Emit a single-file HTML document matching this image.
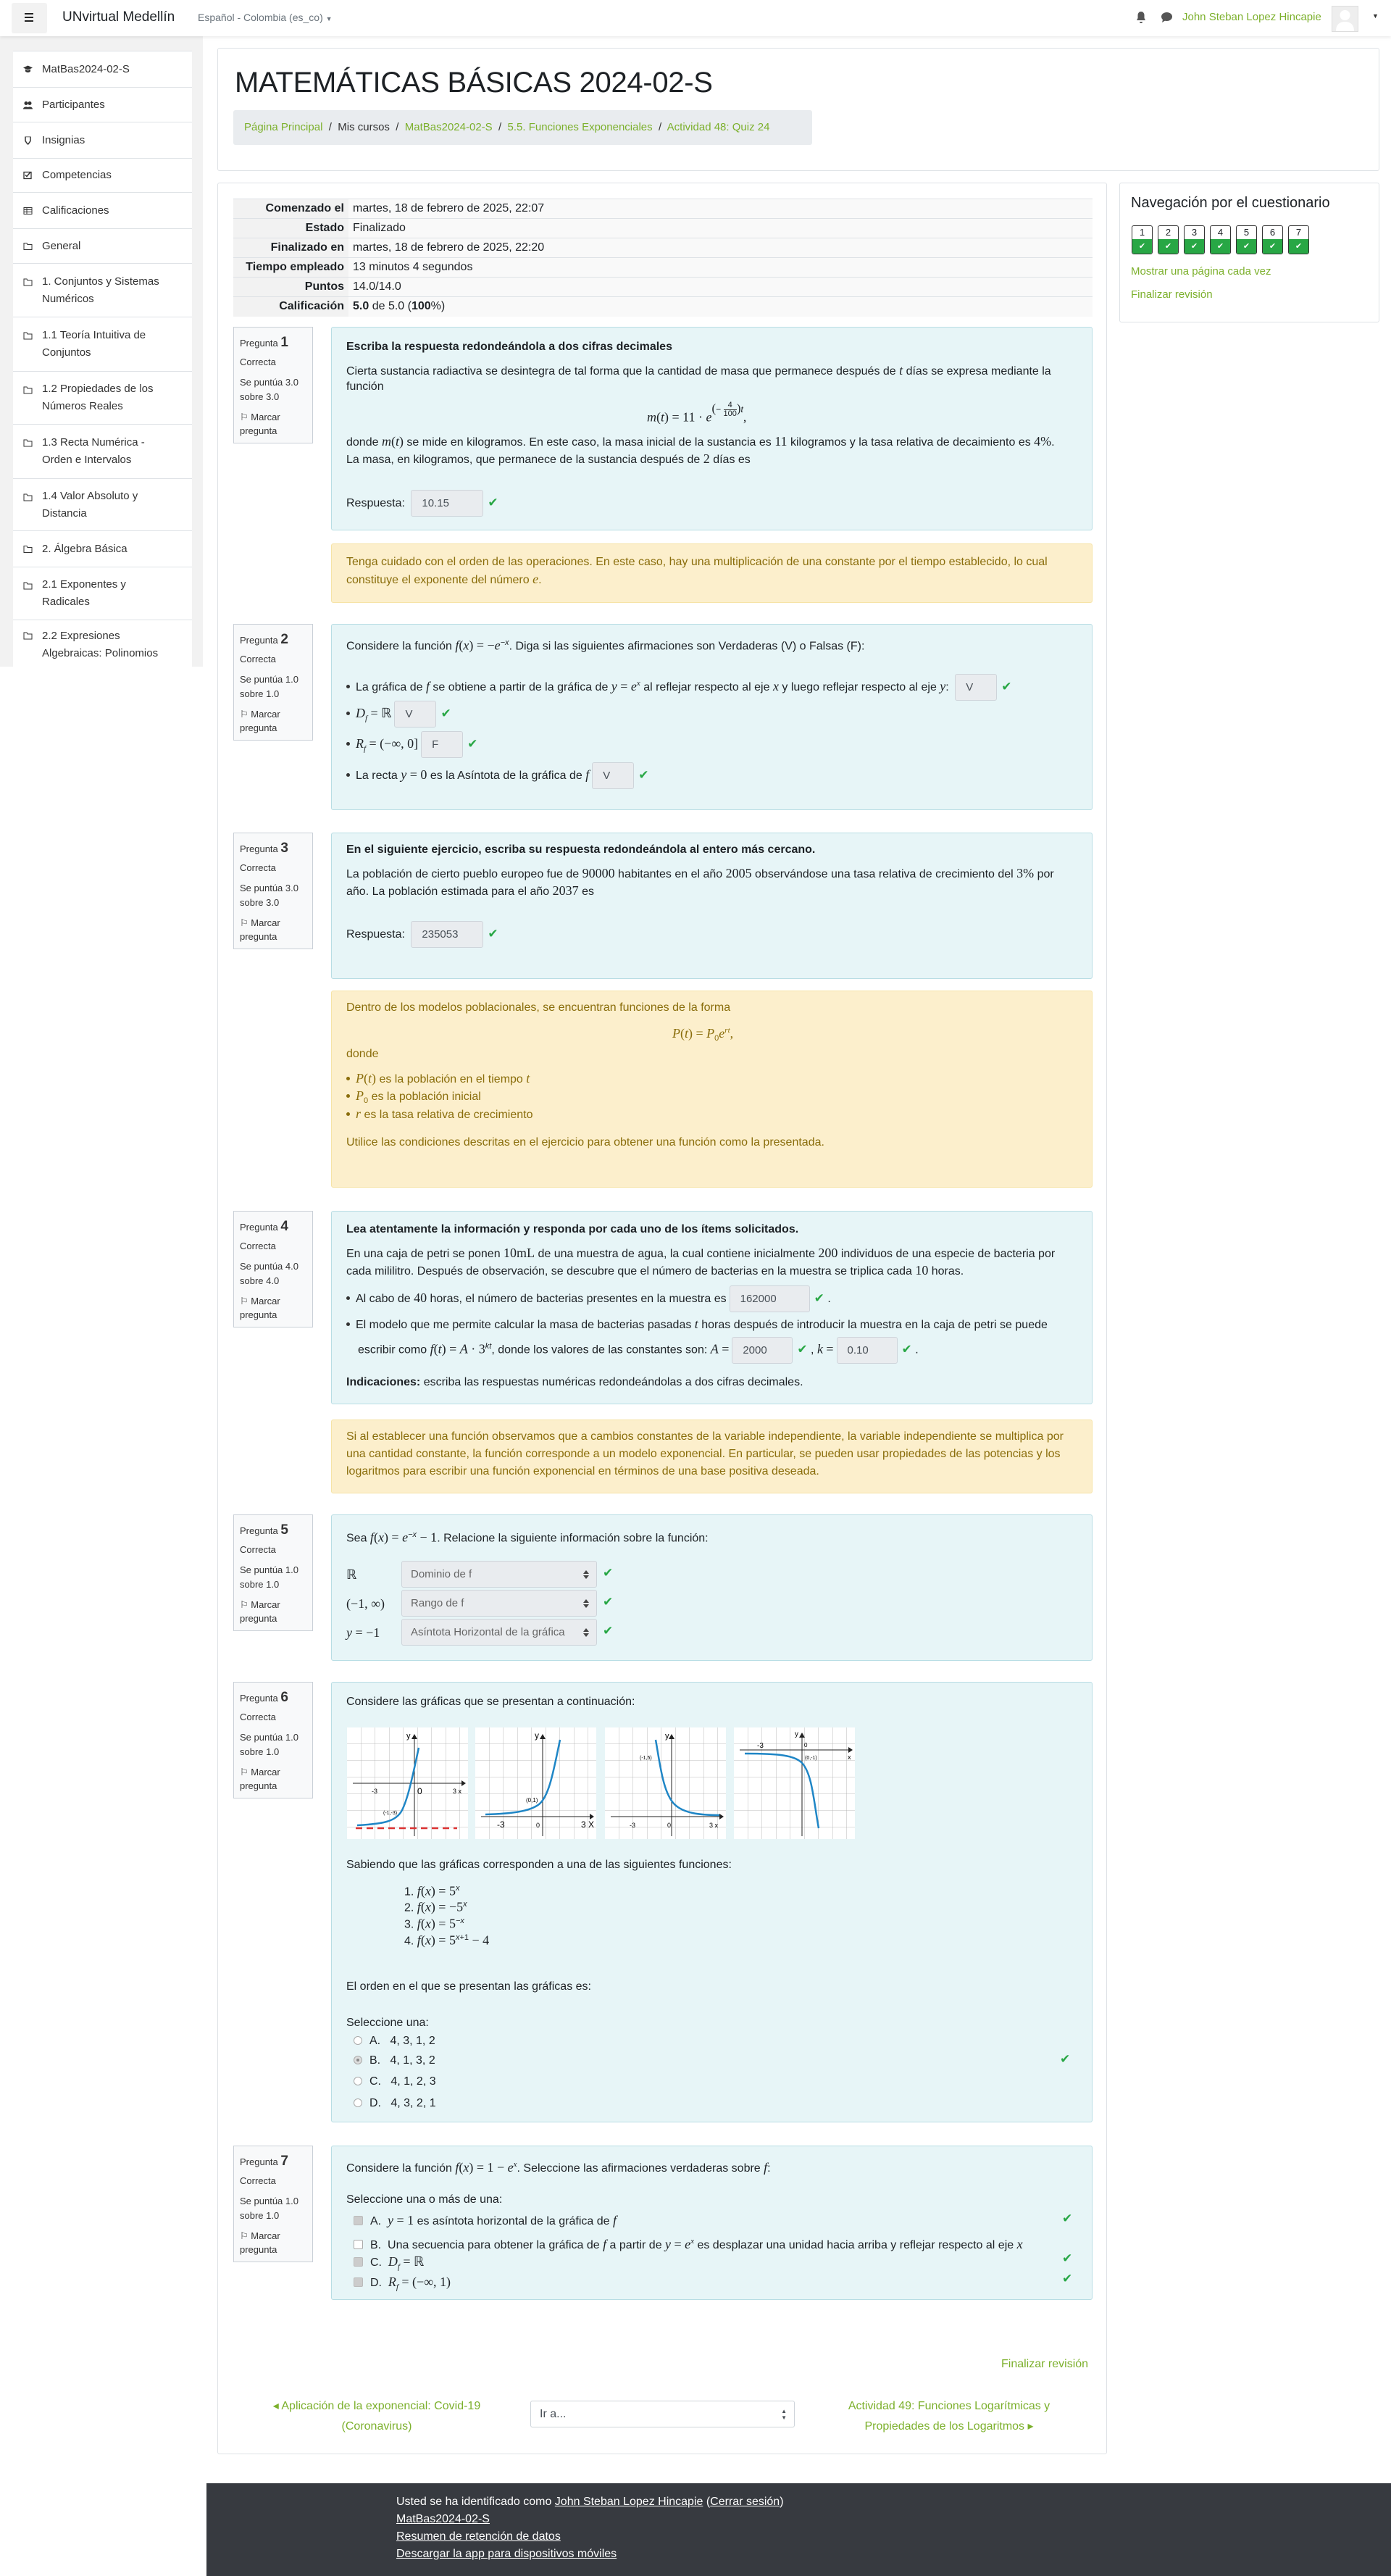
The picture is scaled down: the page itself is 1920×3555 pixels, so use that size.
<!DOCTYPE html>
<html><head><meta charset="utf-8">
<style>
*{box-sizing:border-box;margin:0;padding:0}
body{width:1920px;height:3555px;position:relative;background:#fff;font-family:"Liberation Sans",sans-serif;font-size:16px;color:#1d2125;overflow:hidden}
.a{position:absolute}
.g{color:#7cb02c}
.m{font-family:"Liberation Serif",serif;font-style:italic;font-size:18px}
.mr{font-family:"Liberation Serif",serif;font-size:18px}
.nav{left:0;top:0;width:1920px;height:50px;background:#fff;box-shadow:0 2px 4px rgba(0,0,0,.08);z-index:5}
.side{left:0;top:50px;width:280px;height:870px;background:#f2f2f2}
.si{position:absolute;left:18px;width:247px;background:#fff;border-top:1px solid #dee2e6;color:#333;font-size:15px;padding-left:40px;display:flex;align-items:center;line-height:24px}
.si .ic{position:absolute;left:14px;top:50%;transform:translateY(-50%);width:13px;height:11px}
.card{border:1px solid #dee2e6;background:#fff;border-radius:3px}
.qi{position:absolute;left:322px;width:110px;height:161px;background:#f8f9fa;border:1px solid #cad0d7;font-size:13px;color:#333}
.qi div{position:absolute;left:8px;line-height:18px}
.qc{position:absolute;left:457px;width:1051px;background:#e7f5f7;border:1px solid #b8dde4;border-radius:3px}
.fb{position:absolute;left:457px;width:1051px;background:#fcefcc;border:1px solid #f6e3a6;border-radius:3px;color:#8a6d0b}
.l{position:absolute;left:20px;line-height:24px;white-space:nowrap}
.in{display:inline-block;position:relative;vertical-align:middle;margin:-7px 6px -7px 4px;height:37px;background:#e9ecef;border:1px solid #ced4da;border-radius:3px;color:#495057;padding:0 14px;line-height:35px;font-size:15px}
.ck{color:#28a745;font-size:17px;font-family:"DejaVu Sans",sans-serif}
.a.ck,.qc>.ck{position:absolute}
.sel{position:absolute;left:96px;width:270px;height:37px;background:#e9ecef;border:1px solid #ced4da;border-radius:3px;color:#666;padding-left:12px;line-height:35px;font-size:15px}
.sel:after{content:"";position:absolute;right:10px;top:12px;border:4px solid transparent;border-bottom:5px solid #444;border-top:0}
.sel:before{content:"";position:absolute;right:10px;top:19px;border:4px solid transparent;border-top:5px solid #444;border-bottom:0}
.bul{display:inline-block;width:5px;height:5px;background:#333;border-radius:50%;margin:0 8px 3px 0;vertical-align:middle}
.rd{display:inline-block;width:12px;height:12px;border:1px solid #aaa;border-radius:50%;background:#fff;vertical-align:middle;margin:0 10px 2px 0;position:relative}
.cb{display:inline-block;width:13px;height:13px;border:1px solid #aaa;border-radius:2px;background:#fff;vertical-align:middle;margin:0 10px 2px 0}
.cb.on{background:#ccc;border-color:#bbb}
table{border-collapse:collapse}
.frac{display:inline-block;vertical-align:middle;text-align:center;font-size:11px;line-height:11px;font-style:normal}
.frac span{display:block}
.frac .n{border-bottom:1px solid #333}
.nb{position:absolute;top:311px;width:29px;height:40px;border:1px solid #333;border-radius:3px;background:#fff;overflow:hidden;font-size:13px;text-align:center;line-height:18px}
.nb i{position:absolute;left:0;bottom:0;width:100%;height:20px;background:#28a745;color:#fff;font-style:normal;font-size:11px;line-height:20px;font-family:"DejaVu Sans",sans-serif}
.ft a{color:#fff;text-decoration:underline}
</style></head><body>

<div class="a nav">
  <div class="a" style="left:16px;top:4px;width:49px;height:42px;background:#f2f2f2;border-radius:3px"></div>
  <div class="a" style="left:34px;top:18px;width:12px;height:2px;background:#222;box-shadow:0 5px 0 #222,0 10px 0 #222"></div>
  <div class="a" style="left:86px;top:13px;font-size:19px;color:#1d2125">UNvirtual Medellín</div>
  <div class="a" style="left:273px;top:16px;font-size:14px;color:#6a737b">Español - Colombia (es_co) <span style="font-size:9px">▼</span></div>
  <svg class="a" style="left:1568px;top:15px" width="14" height="18" viewBox="0 0 14 18"><path d="M7 1c-3 0-4.5 2.5-4.5 5v4L1 13h12l-1.5-3V6C11.5 3.5 10 1 7 1z M5 15a2 2 0 0 0 4 0z" fill="#555"/></svg>
  <svg class="a" style="left:1602px;top:16px" width="17" height="16" viewBox="0 0 17 16"><ellipse cx="8.5" cy="7" rx="7.5" ry="6" fill="#555"/><path d="M3 11 L2 15 L7 12z" fill="#555"/></svg>
  <div class="a g" style="left:1632px;top:15px;font-size:15px">John Steban Lopez Hincapie</div>
  <div class="a" style="left:1838px;top:8px;width:37px;height:36px;background:#eee;border:1px solid #ddd"><svg width="35" height="34" viewBox="0 0 35 34"><circle cx="17.5" cy="12" r="7" fill="#fff"/><path d="M5 34c0-9 5-13 12.5-13S30 25 30 34z" fill="#fff"/></svg></div>
  <div class="a" style="left:1894px;top:17px;font-size:9px;color:#333">▼</div>
</div>

<div class="a side"></div>
<div class="si" style="top:70px;height:50px"><svg class="ic" viewBox="0 0 13 11"><path d="M6.5 0L13 3 6.5 6 0 3z M3 5v3c2 2 5 2 7 0V5L6.5 7z" fill="#333"/></svg>MatBas2024-02-S</div>
<div class="si" style="top:120px;height:48px"><svg class="ic" viewBox="0 0 13 11"><circle cx="4" cy="3" r="2.5" fill="#333"/><circle cx="9" cy="3" r="2.5" fill="#333"/><path d="M0 11c0-4 8-4 8 0z M5 11c0-4 8-4 8 0z" fill="#333"/></svg>Participantes</div>
<div class="si" style="top:168px;height:50px"><svg class="ic" viewBox="0 0 13 11"><path d="M3 0h7v6l-3.5 5L3 6z" fill="none" stroke="#333" stroke-width="1.5"/></svg>Insignias</div>
<div class="si" style="top:218px;height:47px"><svg class="ic" viewBox="0 0 13 11"><rect x="1" y="1" width="10" height="9" fill="none" stroke="#333" stroke-width="1.3"/><path d="M3 5l2 2 5-6" fill="none" stroke="#333" stroke-width="1.5"/></svg>Competencias</div>
<div class="si" style="top:265px;height:50px"><svg class="ic" viewBox="0 0 13 11"><rect x="1" y="1" width="11" height="9" fill="none" stroke="#333"/><path d="M1 4h11M1 7h11M5 1v9" stroke="#333"/></svg>Calificaciones</div>
<div class="si" style="top:315px;height:48px"><svg class="ic" viewBox="0 0 13 11"><path d="M1 1h4l1 2h6v7H1z" fill="none" stroke="#333"/></svg>General</div>
<div class="si" style="top:363px;height:74px"><svg class="ic" viewBox="0 0 13 11" style="top:20px;transform:none"><path d="M1 1h4l1 2h6v7H1z" fill="none" stroke="#333"/></svg>1. Conjuntos y Sistemas<br>Numéricos</div>
<div class="si" style="top:437px;height:75px"><svg class="ic" viewBox="0 0 13 11" style="top:20px;transform:none"><path d="M1 1h4l1 2h6v7H1z" fill="none" stroke="#333"/></svg>1.1 Teoría Intuitiva de<br>Conjuntos</div>
<div class="si" style="top:512px;height:73px"><svg class="ic" viewBox="0 0 13 11" style="top:20px;transform:none"><path d="M1 1h4l1 2h6v7H1z" fill="none" stroke="#333"/></svg>1.2 Propiedades de los<br>Números Reales</div>
<div class="si" style="top:585px;height:75px"><svg class="ic" viewBox="0 0 13 11" style="top:20px;transform:none"><path d="M1 1h4l1 2h6v7H1z" fill="none" stroke="#333"/></svg>1.3 Recta Numérica -<br>Orden e Intervalos</div>
<div class="si" style="top:660px;height:72px"><svg class="ic" viewBox="0 0 13 11" style="top:20px;transform:none"><path d="M1 1h4l1 2h6v7H1z" fill="none" stroke="#333"/></svg>1.4 Valor Absoluto y<br>Distancia</div>
<div class="si" style="top:732px;height:50px"><svg class="ic" viewBox="0 0 13 11"><path d="M1 1h4l1 2h6v7H1z" fill="none" stroke="#333"/></svg>2. Álgebra Básica</div>
<div class="si" style="top:782px;height:73px"><svg class="ic" viewBox="0 0 13 11" style="top:20px;transform:none"><path d="M1 1h4l1 2h6v7H1z" fill="none" stroke="#333"/></svg>2.1 Exponentes y<br>Radicales</div>
<div class="si" style="top:855px;height:65px;align-items:flex-start;padding-top:10px"><svg class="ic" viewBox="0 0 13 11" style="top:16px;transform:none"><path d="M1 1h4l1 2h6v7H1z" fill="none" stroke="#333"/></svg>2.2 Expresiones<br>Algebraicas: Polinomios</div>

<div class="a card" style="left:300px;top:66px;width:1604px;height:170px">
  <div class="a" style="left:23px;top:25px;font-size:40px;color:#1d2125;letter-spacing:-0.3px">MATEMÁTICAS BÁSICAS 2024-02-S</div>
  <div class="a" style="left:21px;top:85px;width:799px;height:48px;background:#e9ecef;border-radius:3px;font-size:15px;line-height:48px;padding-left:15px;white-space:nowrap;color:#333"><span class="g">Página Principal</span> &nbsp;/&nbsp; Mis cursos &nbsp;/&nbsp; <span class="g">MatBas2024-02-S</span> &nbsp;/&nbsp; <span class="g">5.5. Funciones Exponenciales</span> &nbsp;/&nbsp; <span class="g">Actividad 48: Quiz 24</span></div>
</div>

<div class="a card" style="left:300px;top:252px;width:1228px;height:3135px"></div>

<div class="a card" style="left:1545px;top:252px;width:359px;height:193px">
  <div class="a" style="left:15px;top:16px;font-size:20px;color:#1d2125">Navegación por el cuestionario</div>
</div>
<div class="nb" style="left:1562px">1<i>✔</i></div>
<div class="nb" style="left:1598px">2<i>✔</i></div>
<div class="nb" style="left:1634px">3<i>✔</i></div>
<div class="nb" style="left:1670px">4<i>✔</i></div>
<div class="nb" style="left:1706px">5<i>✔</i></div>
<div class="nb" style="left:1742px">6<i>✔</i></div>
<div class="nb" style="left:1778px">7<i>✔</i></div>
<div class="a g" style="left:1561px;top:366px;font-size:15px">Mostrar una página cada vez</div>
<div class="a g" style="left:1561px;top:398px;font-size:15px">Finalizar revisión</div>

<div class="a" style="left:322px;top:274px;width:1186px">
<table style="width:100%;font-size:16px">
<tr style="height:27px;border-top:1px solid #dee2e6"><th style="width:159px;text-align:right;padding-right:6px;background:#f2f2f2">Comenzado el</th><td style="padding-left:6px;background:#f9f9f9">martes, 18 de febrero de 2025, 22:07</td></tr>
<tr style="height:27px;border-top:1px solid #dee2e6"><th style="text-align:right;padding-right:6px;background:#f2f2f2">Estado</th><td style="padding-left:6px;background:#f9f9f9">Finalizado</td></tr>
<tr style="height:27px;border-top:1px solid #dee2e6"><th style="text-align:right;padding-right:6px;background:#f2f2f2">Finalizado en</th><td style="padding-left:6px;background:#f9f9f9">martes, 18 de febrero de 2025, 22:20</td></tr>
<tr style="height:27px;border-top:1px solid #dee2e6"><th style="text-align:right;padding-right:6px;background:#f2f2f2">Tiempo empleado</th><td style="padding-left:6px;background:#f9f9f9">13 minutos 4 segundos</td></tr>
<tr style="height:27px;border-top:1px solid #dee2e6"><th style="text-align:right;padding-right:6px;background:#f2f2f2">Puntos</th><td style="padding-left:6px;background:#f9f9f9">14.0/14.0</td></tr>
<tr style="height:27px;border-top:1px solid #dee2e6"><th style="text-align:right;padding-right:6px;background:#f2f2f2">Calificación</th><td style="padding-left:6px;background:#f9f9f9"><b>5.0</b> de 5.0 (<b>100</b>%)</td></tr>
</table></div>

<div class="qi" style="top:451px"><div style="top:12px">Pregunta <b style="font-size:19px">1</b></div><div style="top:39px">Correcta</div><div style="top:67px">Se puntúa 3.0</div><div style="top:87px">sobre 3.0</div><div style="top:115px">⚐ Marcar</div><div style="top:134px">pregunta</div></div>
<div class="qi" style="top:861px"><div style="top:12px">Pregunta <b style="font-size:19px">2</b></div><div style="top:39px">Correcta</div><div style="top:67px">Se puntúa 1.0</div><div style="top:87px">sobre 1.0</div><div style="top:115px">⚐ Marcar</div><div style="top:134px">pregunta</div></div>
<div class="qi" style="top:1149px"><div style="top:12px">Pregunta <b style="font-size:19px">3</b></div><div style="top:39px">Correcta</div><div style="top:67px">Se puntúa 3.0</div><div style="top:87px">sobre 3.0</div><div style="top:115px">⚐ Marcar</div><div style="top:134px">pregunta</div></div>
<div class="qi" style="top:1671px"><div style="top:12px">Pregunta <b style="font-size:19px">4</b></div><div style="top:39px">Correcta</div><div style="top:67px">Se puntúa 4.0</div><div style="top:87px">sobre 4.0</div><div style="top:115px">⚐ Marcar</div><div style="top:134px">pregunta</div></div>
<div class="qi" style="top:2090px"><div style="top:12px">Pregunta <b style="font-size:19px">5</b></div><div style="top:39px">Correcta</div><div style="top:67px">Se puntúa 1.0</div><div style="top:87px">sobre 1.0</div><div style="top:115px">⚐ Marcar</div><div style="top:134px">pregunta</div></div>
<div class="qi" style="top:2321px"><div style="top:12px">Pregunta <b style="font-size:19px">6</b></div><div style="top:39px">Correcta</div><div style="top:67px">Se puntúa 1.0</div><div style="top:87px">sobre 1.0</div><div style="top:115px">⚐ Marcar</div><div style="top:134px">pregunta</div></div>
<div class="qi" style="top:2961px"><div style="top:12px">Pregunta <b style="font-size:19px">7</b></div><div style="top:39px">Correcta</div><div style="top:67px">Se puntúa 1.0</div><div style="top:87px">sobre 1.0</div><div style="top:115px">⚐ Marcar</div><div style="top:134px">pregunta</div></div>

<!-- Q1 -->
<div class="qc" style="top:451px;height:281px">
  <div class="l" style="top:15px"><b>Escriba la respuesta redondeándola a dos cifras decimales</b></div>
  <div class="l" style="top:47px">Cierta sustancia radiactiva se desintegra de tal forma que la cantidad de masa que permanece después de <span class="m">t</span> días se expresa mediante la</div>
  <div class="l" style="top:70px">función</div>
  <div class="l" style="top:100px;left:435px;line-height:36px"><span class="m">m</span><span class="mr">(</span><span class="m">t</span><span class="mr">) = 11 · </span><span class="m">e</span><sup style="font-size:12px;position:relative;top:-6px"><span class="mr" style="font-size:17px">(</span>− <span class="frac"><span class="n">4</span><span>100</span></span><span class="mr" style="font-size:17px">)</span><i>t</i></sup><span class="mr">,</span></div>
  <div class="l" style="top:145px">donde <span class="m">m</span><span class="mr">(</span><span class="m">t</span><span class="mr">)</span> se mide en kilogramos. En este caso, la masa inicial de la sustancia es <span class="mr">11</span> kilogramos y la tasa relativa de decaimiento es <span class="mr">4%</span>.</div>
  <div class="l" style="top:169px">La masa, en kilogramos, que permanece de la sustancia después de <span class="mr">2</span> días es</div>
  <div class="l" style="top:230px">Respuesta: <span class="in" style="width:100px">10.15</span><span class="ck">✔</span></div>
</div>
<div class="fb" style="top:750px;height:82px">
  <div class="l" style="top:13px">Tenga cuidado con el orden de las operaciones. En este caso, hay una multiplicación de una constante por el tiempo establecido, lo cual</div>
  <div class="l" style="top:36px">constituye el exponente del número <span class="m">e</span>.</div>
</div>

<!-- Q2 -->
<div class="qc" style="top:861px;height:257px">
  <div class="l" style="top:13px">Considere la función <span class="m">f</span><span class="mr">(</span><span class="m">x</span><span class="mr">) = −</span><span class="m">e</span><sup style="font-size:11px"><i>−x</i></sup>. Diga si las siguientes afirmaciones son Verdaderas (V) o Falsas (F):</div>
  <div class="l" style="top:69px"><span class="bul"></span>La gráfica de <span class="m">f</span> se obtiene a partir de la gráfica de <span class="m">y</span> <span class="mr">=</span> <span class="m">e<sup style="font-size:11px">x</sup></span> al reflejar respecto al eje <span class="m">x</span> y luego reflejar respecto al eje <span class="m">y</span>: <span class="in" style="width:58px">V</span><span class="ck">✔</span></div>
  <div class="l" style="top:110px"><span class="bul"></span><span class="m">D<sub style="font-size:11px">f</sub></span> <span class="mr">= ℝ</span><span class="in" style="width:58px">V</span><span class="ck">✔</span></div>
  <div class="l" style="top:152px"><span class="bul"></span><span class="m">R<sub style="font-size:11px">f</sub></span> <span class="mr">= (−∞, 0]</span><span class="in" style="width:58px">F</span><span class="ck">✔</span></div>
  <div class="l" style="top:195px"><span class="bul"></span>La recta <span class="m">y</span> <span class="mr">= 0</span> es la Asíntota de la gráfica de <span class="m">f</span><span class="in" style="width:58px">V</span><span class="ck">✔</span></div>
</div>

<!-- Q3 -->
<div class="qc" style="top:1149px;height:202px">
  <div class="l" style="top:11px"><b>En el siguiente ejercicio, escriba su respuesta redondeándola al entero más cercano.</b></div>
  <div class="l" style="top:43px">La población de cierto pueblo europeo fue de <span class="mr">90000</span> habitantes en el año <span class="mr">2005</span> observándose una tasa relativa de crecimiento del <span class="mr">3%</span> por</div>
  <div class="l" style="top:67px">año. La población estimada para el año <span class="mr">2037</span> es</div>
  <div class="l" style="top:127px">Respuesta: <span class="in" style="width:100px">235053</span><span class="ck">✔</span></div>
</div>
<div class="fb" style="top:1367px;height:272px">
  <div class="l" style="top:11px">Dentro de los modelos poblacionales, se encuentran funciones de la forma</div>
  <div class="l" style="top:42px;left:470px"><span class="m">P</span><span class="mr">(</span><span class="m">t</span><span class="mr">) = </span><span class="m">P</span><sub style="font-size:11px">0</sub><span class="m">e<sup style="font-size:11px">rt</sup></span><span class="mr">,</span></div>
  <div class="l" style="top:75px">donde</div>
  <div class="l" style="top:108px"><span class="bul" style="background:#8a6d0b"></span><span class="m">P</span><span class="mr">(</span><span class="m">t</span><span class="mr">)</span> es la población en el tiempo <span class="m">t</span></div>
  <div class="l" style="top:132px"><span class="bul" style="background:#8a6d0b"></span><span class="m">P</span><sub style="font-size:11px">0</sub> es la población inicial</div>
  <div class="l" style="top:157px"><span class="bul" style="background:#8a6d0b"></span><span class="m">r</span> es la tasa relativa de crecimiento</div>
  <div class="l" style="top:197px">Utilice las condiciones descritas en el ejercicio para obtener una función como la presentada.</div>
</div>

<!-- Q4 -->
<div class="qc" style="top:1671px;height:267px">
  <div class="l" style="top:13px"><b>Lea atentamente la información y responda por cada uno de los ítems solicitados.</b></div>
  <div class="l" style="top:45px">En una caja de petri se ponen <span class="mr">10mL</span> de una muestra de agua, la cual contiene inicialmente <span class="mr">200</span> individuos de una especie de bacteria por</div>
  <div class="l" style="top:69px">cada mililitro. Después de observación, se descubre que el número de bacterias en la muestra se triplica cada <span class="mr">10</span> horas.</div>
  <div class="l" style="top:107px"><span class="bul"></span>Al cabo de <span class="mr">40</span> horas, el número de bacterias presentes en la muestra es<span class="in" style="width:111px">162000</span><span class="ck">✔</span> .</div>
  <div class="l" style="top:143px"><span class="bul"></span>El modelo que me permite calcular la masa de bacterias pasadas <span class="m">t</span> horas después de introducir la muestra en la caja de petri se puede</div>
  <div class="l" style="top:174px;left:36px">escribir como <span class="m">f</span><span class="mr">(</span><span class="m">t</span><span class="mr">) = </span><span class="m">A</span><span class="mr"> · 3</span><sup style="font-size:11px"><i>kt</i></sup>, donde los valores de las constantes son: <span class="m">A</span> <span class="mr">=</span><span class="in" style="width:84px">2000</span><span class="ck">✔</span> , <span class="m">k</span> <span class="mr">=</span><span class="in" style="width:84px">0.10</span><span class="ck">✔</span> .</div>
  <div class="l" style="top:224px"><b>Indicaciones:</b> escriba las respuestas numéricas redondeándolas a dos cifras decimales.</div>
</div>
<div class="fb" style="top:1959px;height:102px">
  <div class="l" style="top:11px">Si al establecer una función observamos que a cambios constantes de la variable independiente, la variable independiente se multiplica por</div>
  <div class="l" style="top:35px">una cantidad constante, la función corresponde a un modelo exponencial. En particular, se pueden usar propiedades de las potencias y los</div>
  <div class="l" style="top:59px">logaritmos para escribir una función exponencial en términos de una base positiva deseada.</div>
</div>

<!-- Q5 -->
<div class="qc" style="top:2090px;height:202px">
  <div class="l" style="top:15px">Sea <span class="m">f</span><span class="mr">(</span><span class="m">x</span><span class="mr">) = </span><span class="m">e</span><sup style="font-size:11px"><i>−x</i></sup><span class="mr"> − 1</span>. Relacione la siguiente información sobre la función:</div>
  <div class="l" style="top:70px"><span class="mr">ℝ</span></div>
  <div class="sel" style="top:63px">Dominio de f</div><div class="ck" style="left:374px;top:70px">✔</div>
  <div class="l" style="top:110px"><span class="mr">(−1, ∞)</span></div>
  <div class="sel" style="top:103px">Rango de f</div><div class="ck" style="left:374px;top:110px">✔</div>
  <div class="l" style="top:150px"><span class="m">y</span> <span class="mr">= −1</span></div>
  <div class="sel" style="top:143px;overflow:hidden;white-space:nowrap">Asíntota Horizontal de la gráfica</div><div class="ck" style="left:374px;top:150px">✔</div>
</div>

<!-- Q6 -->
<div class="qc" style="top:2321px;height:608px">
  <div class="l" style="top:15px">Considere las gráficas que se presentan a continuación:</div>
  <svg class="a" style="left:21px;top:62px" width="704" height="154" viewBox="0 0 704 154" font-family="Liberation Sans" font-size="9">
    <defs>
      <pattern id="gr" width="19.5" height="23" patternUnits="userSpaceOnUse"><path d="M19.5 0V23M0 23H19.5" stroke="#aaa" stroke-width="0.8" fill="none"/></pattern>
    </defs>
    <g>
      <rect width="167" height="154" fill="#fff"/><rect width="167" height="154" fill="url(#gr)"/>
      <path d="M8 77H158M93 150V14" stroke="#222" stroke-width="1"/><path d="M158 73l6 4-6 4zM89 16l4-7 4 7z" fill="#222"/>
      <path d="M12 139H152" stroke="#d33" stroke-width="2.5" stroke-dasharray="9 6"/>
      <path d="M14 135C50 133 68 130 76 114C84 98 90 70 99 28" stroke="#1f86c6" stroke-width="2.5" fill="none"/>
      <text x="34" y="91">-3</text><text x="97" y="92" font-size="12">0</text><text x="146" y="91">3 x</text><text x="82" y="15" font-size="11">y</text><text x="50" y="120" font-size="7">(-1,-3)</text>
    </g>
    <g transform="translate(177,0)">
      <rect width="167" height="154" fill="#fff"/><rect width="167" height="154" fill="url(#gr)"/>
      <path d="M8 123H158M93 150V14" stroke="#222" stroke-width="1"/><path d="M158 119l6 4-6 4zM89 16l4-7 4 7z" fill="#222"/>
      <path d="M14 120C50 119 75 116 88 106C102 95 108 60 117 17" stroke="#1f86c6" stroke-width="2.5" fill="none"/>
      <text x="30" y="138" font-size="12">-3</text><text x="84" y="138">0</text><text x="146" y="138" font-size="12">3 X</text><text x="82" y="15" font-size="12">y</text><text x="70" y="103" font-size="8">(0,1)</text>
    </g>
    <g transform="translate(356,0)">
      <rect width="167" height="154" fill="#fff"/><rect width="167" height="154" fill="url(#gr)"/>
      <path d="M8 123H158M92 150V14" stroke="#222" stroke-width="1"/><path d="M158 119l6 4-6 4zM88 16l4-7 4 7z" fill="#222"/>
      <path d="M70 17C76 50 80 90 96 106C108 118 130 121 158 121" stroke="#1f86c6" stroke-width="2.5" fill="none"/>
      <text x="34" y="138">-3</text><text x="86" y="138">0</text><text x="144" y="138">3  x</text><text x="83" y="15" font-size="11">y</text><text x="48" y="44" font-size="7">(-1,5)</text>
    </g>
    <g transform="translate(534,0)">
      <rect width="167" height="154" fill="#fff"/><rect width="167" height="154" fill="url(#gr)"/>
      <path d="M8 31H158M94 150V12" stroke="#222" stroke-width="1"/><path d="M158 27l6 4-6 4zM90 14l4-7 4 7z" fill="#222"/>
      <path d="M15 36C60 36 85 38 95 50C108 66 110 100 117 139" stroke="#1f86c6" stroke-width="2.5" fill="none"/>
      <text x="32" y="28" font-size="10">-3</text><text x="97" y="27" font-size="8">0</text><text x="98" y="44" font-size="7">(0,-1)</text><text x="157" y="44">x</text><text x="84" y="12" font-size="10">y</text>
    </g>
  </svg>
  <div class="l" style="top:240px">Sabiendo que las gráficas corresponden a una de las siguientes funciones:</div>
  <div class="l" style="top:272px;left:100px">1. <span class="m">f</span><span class="mr">(</span><span class="m">x</span><span class="mr">) = 5</span><sup style="font-size:11px"><i>x</i></sup></div>
  <div class="l" style="top:294px;left:100px">2. <span class="m">f</span><span class="mr">(</span><span class="m">x</span><span class="mr">) = −5</span><sup style="font-size:11px"><i>x</i></sup></div>
  <div class="l" style="top:317px;left:100px">3. <span class="m">f</span><span class="mr">(</span><span class="m">x</span><span class="mr">) = 5</span><sup style="font-size:11px"><i>−x</i></sup></div>
  <div class="l" style="top:340px;left:100px">4. <span class="m">f</span><span class="mr">(</span><span class="m">x</span><span class="mr">) = 5</span><sup style="font-size:11px"><i>x</i>+1</sup><span class="mr"> − 4</span></div>
  <div class="l" style="top:408px">El orden en el que se presentan las gráficas es:</div>
  <div class="l" style="top:458px">Seleccione una:</div>
  <div class="l" style="top:483px;left:30px"><span class="rd"></span>A. &nbsp; 4, 3, 1, 2</div>
  <div class="l" style="top:510px;left:30px"><span class="rd" style="background:#ddd"><span style="position:absolute;left:3px;top:3px;width:4px;height:4px;border-radius:50%;background:#888"></span></span>B. &nbsp; 4, 1, 3, 2</div>
  <div class="ck" style="left:1005px;top:510px">✔</div>
  <div class="l" style="top:539px;left:30px"><span class="rd"></span>C. &nbsp; 4, 1, 2, 3</div>
  <div class="l" style="top:569px;left:30px"><span class="rd"></span>D. &nbsp; 4, 3, 2, 1</div>
</div>

<!-- Q7 -->
<div class="qc" style="top:2961px;height:213px">
  <div class="l" style="top:13px">Considere la función <span class="m">f</span><span class="mr">(</span><span class="m">x</span><span class="mr">) = 1 − </span><span class="m">e<sup style="font-size:11px">x</sup></span>. Seleccione las afirmaciones verdaderas sobre <span class="m">f</span>:</div>
  <div class="l" style="top:62px">Seleccione una o más de una:</div>
  <div class="l" style="top:90px;left:30px"><span class="cb on"></span>A. &nbsp;<span class="m">y</span> <span class="mr">= 1</span> es asíntota horizontal de la gráfica de <span class="m">f</span></div>
  <div class="ck" style="left:1008px;top:90px">✔</div>
  <div class="l" style="top:119px;left:30px"><span class="cb"></span>B. &nbsp;Una secuencia para obtener la gráfica de <span class="m">f</span> a partir de <span class="m">y</span> <span class="mr">=</span> <span class="m">e<sup style="font-size:11px">x</sup></span> es desplazar una unidad hacia arriba y reflejar respecto al eje <span class="m">x</span></div>
  <div class="l" style="top:147px;left:30px"><span class="cb on"></span>C. &nbsp;<span class="m">D<sub style="font-size:11px">f</sub></span> <span class="mr">= ℝ</span></div>
  <div class="ck" style="left:1008px;top:145px">✔</div>
  <div class="l" style="top:175px;left:30px"><span class="cb on"></span>D. &nbsp;<span class="m">R<sub style="font-size:11px">f</sub></span> <span class="mr">= (−∞, 1)</span></div>
  <div class="ck" style="left:1008px;top:173px">✔</div>
</div>

<div class="a g" style="left:1382px;top:3254px">Finalizar revisión</div>
<div class="a g" style="left:355px;top:3307px;width:330px;text-align:center;line-height:28px">◂ Aplicación de la exponencial: Covid-19<br>(Coronavirus)</div>
<div class="a" style="left:732px;top:3313px;width:365px;height:37px;border:1px solid #ced4da;border-radius:3px;background:#fff;padding-left:12px;line-height:35px;color:#495057">Ir a...<span style="position:absolute;right:10px;top:0;font-size:8px;line-height:9px;padding-top:9px">▲<br>▼</span></div>
<div class="a g" style="left:1140px;top:3307px;width:340px;text-align:center;line-height:28px">Actividad 49: Funciones Logarítmicas y<br>Propiedades de los Logaritmos ▸</div>

<div class="a ft" style="left:285px;top:3427px;width:1635px;height:128px;background:#373a40;color:#fff;font-size:16px">
  <div class="a" style="left:262px;top:17px">Usted se ha identificado como <a>John Steban Lopez Hincapie</a> (<a>Cerrar sesión</a>)</div>
  <div class="a" style="left:262px;top:41px"><a>MatBas2024-02-S</a></div>
  <div class="a" style="left:262px;top:65px"><a>Resumen de retención de datos</a></div>
  <div class="a" style="left:262px;top:89px"><a>Descargar la app para dispositivos móviles</a></div>
</div>
</body></html>
